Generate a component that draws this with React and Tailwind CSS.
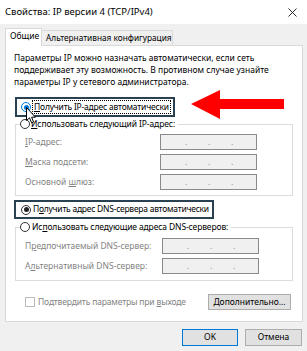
import React from 'react';

function Radio({ checked, blue }) {
  return (
    <span
      className={`flex h-[10px] w-[10px] shrink-0 items-center justify-center rounded-full border bg-white ${
        blue ? 'border-[#0078d7]' : 'border-[#333333]'
      }`}
    >
      {checked && (
        <span className={`h-[5px] w-[5px] rounded-full ${blue ? 'bg-[#0078d7]' : 'bg-[#222222]'}`} />
      )}
    </span>
  );
}

function IpBox({ width }) {
  return (
    <div
      className={`flex h-[16px] items-end border border-[#8a8a8a] bg-[#f0f0f0] pb-[3px] pl-[24px] leading-none text-[#8a8a8a] ${width}`}
    >
      <span className="w-[23px]">.</span>
      <span className="w-[23px]">.</span>
      <span className="w-[23px]">.</span>
    </div>
  );
}

function Row({ label, labelWidth }) {
  return (
    <div className="flex h-[16px] items-center">
      <span className={`shrink-0 pl-[9px] text-[#838383] ${labelWidth}`}>{label}</span>
      <IpBox width="w-[97px]" />
    </div>
  );
}

export default function App() {
  return (
    <div className="relative h-[351px] w-[307px] overflow-hidden whitespace-nowrap bg-[#f0f0f0] font-['Noto_Sans',sans-serif] text-[8.5px] text-black">
      {/* title bar */}
      <div className="flex h-[24px] items-center justify-between bg-white pl-[5px] pr-[10px] text-[9.5px]">
        <span>Свойства: IP версии 4 (TCP/IPv4)</span>
        <svg width="9" height="9" viewBox="0 0 9 9">
          <path d="M0.5 0.5 L8.5 8.5 M8.5 0.5 L0.5 8.5" stroke="#111" strokeWidth="0.9" />
        </svg>
      </div>

      {/* tabs */}
      <div className="mt-[4px] flex h-[17px] items-end px-[5px]">
        <div className="relative z-10 -mb-px flex h-[18px] w-[37px] items-center border border-b-0 border-[#d9d9d9] bg-white pb-[2px] pl-[4px]">
          Общие
        </div>
        <div className="flex h-[15px] w-[131px] items-center border border-l-0 border-b-0 border-[#d9d9d9] bg-[#f0f0f0] pl-[4px] text-[8.3px]">
          Альтернативная конфигурация
        </div>
      </div>

      {/* panel */}
      <div className="mx-[5px] flex h-[277px] w-[298px] flex-col border border-[#d9d9d9] bg-white">
        <p className="ml-[8px] mt-[6px] leading-[12px]">
          Параметры IP можно назначать автоматически, если сеть
          <br />
          поддерживает эту возможность. В противном случае узнайте
          <br />
          параметры IP у сетевого администратора.
        </p>

        <div className="ml-[9px] mt-[9px] flex h-[20px] w-fit items-center border-2 border-[#2a4152] pl-[4px] pr-[2px]">
          <Radio checked blue />
          <span className="ml-px border border-dotted border-black px-px leading-[12px] tracking-[-0.2px]">
            <u className="underline">П</u>олучить IP-адрес автоматически
          </span>
        </div>

        <fieldset className="ml-[9px] w-[278px] border border-[#dcdcdc] pb-[5px]">
          <legend className="ml-[4px] flex h-[14px] items-center pr-[3px]">
            <Radio />
            <span className="ml-px tracking-[-0.1px]">
              <u className="underline">И</u>спользовать следующий IP-адрес:
            </span>
          </legend>
          <div className="mt-[3px] flex flex-col gap-[4px]">
            <Row
              labelWidth="w-[144px]"
              label={
                <>
                  <u className="underline">I</u>P-адрес:
                </>
              }
            />
            <Row
              labelWidth="w-[144px]"
              label={
                <>
                  <u className="underline">М</u>аска подсети:
                </>
              }
            />
            <Row
              labelWidth="w-[144px]"
              label={
                <>
                  Основной <u className="underline">ш</u>люз:
                </>
              }
            />
          </div>
        </fieldset>

        <div className="ml-[8px] mt-[4px] flex h-[19px] w-fit items-center border-2 border-[#2a4152] pl-[5px] pr-[3px]">
          <Radio checked />
          <span className="ml-[2px] tracking-[-0.25px]">
            П<u className="underline">о</u>лучить адрес DNS-сервера автоматически
          </span>
        </div>

        <fieldset className="ml-[9px] mt-px w-[278px] border border-[#dcdcdc] pb-[6px]">
          <legend className="ml-[4px] flex h-[14px] items-center pr-[3px]">
            <Radio />
            <span className="ml-[2px] tracking-[-0.12px]">
              Ис<u className="underline">п</u>ользовать следующие адреса DNS-серверов:
            </span>
          </legend>
          <div className="mt-[4px] flex flex-col gap-[4px]">
            <Row
              labelWidth="w-[146px]"
              label={
                <>
                  П<u className="underline">р</u>едпочитаемый DNS-сервер:
                </>
              }
            />
            <Row
              labelWidth="w-[146px]"
              label={
                <>
                  А<u className="underline">л</u>ьтернативный DNS-сервер:
                </>
              }
            />
          </div>
        </fieldset>

        <div className="mt-[13px] flex h-[16px] items-center">
          <span className="ml-[19px] h-[10px] w-[10px] border border-[#bcbcbc] bg-white" />
          <span className="ml-[3px] tracking-[-0.15px] text-[#838383]">
            Подтвердить параметры при <u className="underline">в</u>ыходе
          </span>
          <button className="ml-auto mr-[11px] flex h-[16px] w-[83px] items-center justify-center border border-[#adadad] bg-[#e1e1e1]">
            <u className="underline">Д</u>ополнительно...
          </button>
        </div>
      </div>

      {/* dialog buttons */}
      <div className="mt-[7px] flex justify-end gap-[7px] pr-[5px]">
        <button className="flex h-[17px] w-[56px] items-center justify-center border border-[#0078d7] bg-[#e1e1e1]">
          OK
        </button>
        <button className="flex h-[17px] w-[57px] items-center justify-center border border-[#adadad] bg-[#e1e1e1]">
          Отмена
        </button>
      </div>

      {/* red arrow annotation */}
      <svg className="absolute left-[190px] top-[89px]" width="96" height="32" viewBox="0 0 96 32">
        <polygon points="1,15 30,1 30,10 94,10 94,20 30,20 30,30" fill="#ff0000" />
      </svg>

      {/* mouse cursor */}
      <svg className="absolute left-[26px] top-[107px]" width="11" height="17" viewBox="0 0 11 17">
        <path
          d="M0.5 0.5 L0.5 13.5 L3.5 10.8 L5.6 15.8 L7.6 15 L5.6 10.2 L9.5 10.2 Z"
          fill="#fff"
          stroke="#000"
          strokeWidth="1"
          strokeLinejoin="miter"
        />
      </svg>
    </div>
  );
}
